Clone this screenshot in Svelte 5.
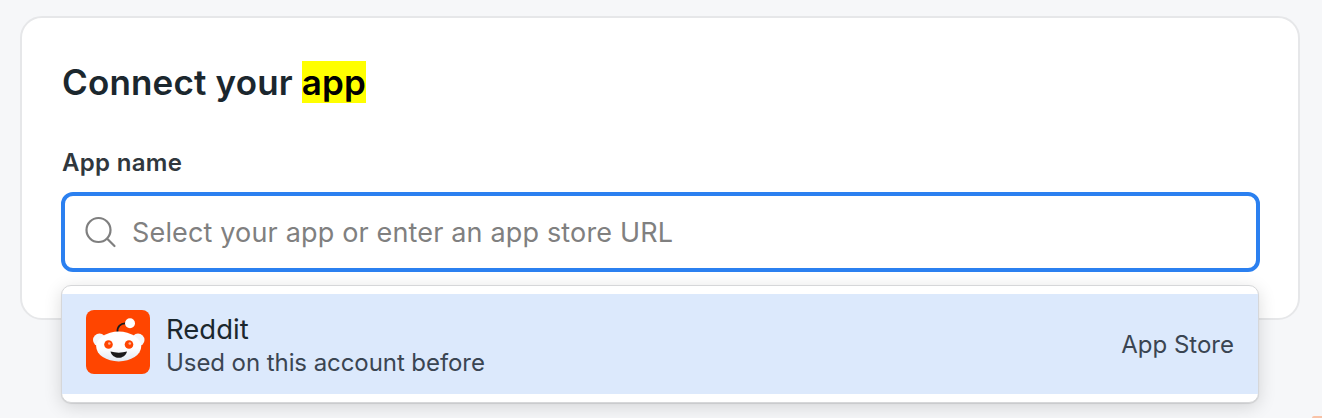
<script>
  const title = 'Connect your';
</script>

<div class="page">
  <section class="card">
    <h1>{title} <mark>app</mark></h1>
    <div class="label">App name</div>
    <div class="field">
      <div class="input">
        <svg class="search" width="32" height="32" viewBox="0 0 32 32" fill="none" stroke="#7f7f7f" stroke-width="2.2" stroke-linecap="round">
          <circle cx="13.500" cy="14" r="12"/>
          <path d="M22.500 23l7 7"/>
        </svg>
        <span class="placeholder">Select your app or enter an app store URL</span>
      </div>
      <div class="menu">
        <div class="option">
          <svg class="logo" width="64" height="64" viewBox="0 0 64 64">
            <defs>
              <linearGradient id="head" x1="0" y1="0" x2="0" y2="1">
                <stop offset="0.55" stop-color="#ffffff"/>
                <stop offset="1" stop-color="#dfe8f2"/>
              </linearGradient>
            </defs>
            <rect width="64" height="64" rx="8" fill="#ff4500"/>
            <path d="M31.500 22c-0.500-5 3-9 8.500-8.500" fill="none" stroke="#1a1a1b" stroke-width="1.800" stroke-linecap="round"/>
            <circle cx="44" cy="13.300" r="5" fill="#fff"/>
            <circle cx="13.500" cy="30" r="6.500" fill="#f4f7fa"/>
            <circle cx="52" cy="30" r="6.500" fill="#f4f7fa"/>
            <ellipse cx="32.700" cy="36.500" rx="22.500" ry="15" fill="url(#head)"/>
            <circle cx="22.500" cy="34.500" r="4.300" fill="#ff4500"/>
            <circle cx="43" cy="34.500" r="4.300" fill="#ff4500"/>
            <circle cx="23.300" cy="33.500" r="1.300" fill="#ffb199"/>
            <circle cx="43.800" cy="33.500" r="1.300" fill="#ffb199"/>
            <path d="M24.500 41.500c5 1.500 11.500 1.500 16.500 0c-1 4-4.500 6.300-8.250 6.300s-7.250-2.300-8.250-6.300z" fill="#1a1a1b"/>
          </svg>
          <div class="text">
            <div class="name">Reddit</div>
            <div class="sub">Used on this account before</div>
          </div>
          <div class="store">App Store</div>
        </div>
      </div>
    </div>
  </section>
  <div class="sliver"></div>
</div>

<style>
  :global(body) {
    margin: 0;
    background: #f6f7f9;
  }
  .page {
    position: relative;
    height: 418px;
    padding: 16px 22px 0 20px;
    box-sizing: border-box;
    overflow: hidden;
    font-family: Inter, "Noto Sans", sans-serif;
  }
  .card {
    box-sizing: border-box;
    height: 304px;
    padding: 42px 38px 0 39px;
    background: #fff;
    border: 2px solid #e6e7e9;
    border-radius: 22px;
  }
  h1 {
    margin: 0 0 0 1px;
    font-size: 35px;
    line-height: 44px;
    font-weight: 600;
    letter-spacing: 0.17px;
    color: #1b272e;
  }
  mark {
    background: #ffff00;
    color: #000;
  }
  .label {
    margin: 44px 0 0 1px;
    font-size: 24px;
    line-height: 30px;
    font-weight: 600;
    letter-spacing: 0.3px;
    color: #30373d;
  }
  .field {
    position: relative;
    margin-top: 14px;
  }
  .input {
    box-sizing: border-box;
    height: 80px;
    display: flex;
    align-items: center;
    gap: 15px;
    padding: 0 20px;
    border: 4px solid #2b80f0;
    border-radius: 12px;
    background: #fff;
  }
  .search { flex: none; }
  .placeholder {
    font-size: 27px;
    letter-spacing: 0.16px;
    color: #808080;
  }
  .menu {
    position: absolute;
    left: 0;
    right: 1px;
    top: 93px;
    box-sizing: border-box;
    padding: 8px 0;
    background: #fff;
    border: 1px solid #d6d7d9;
    border-radius: 10px;
    box-shadow: 0 1px 1px rgba(0, 0, 0, 0.1), 0 4px 18px rgba(0, 0, 0, 0.14);
  }
  .option {
    height: 100px;
    display: flex;
    align-items: center;
    padding: 0 24px;
    background: #dce9fc;
  }
  .logo {
    flex: none;
    margin-bottom: 4px;
  }
  .text {
    margin-left: 16px;
    padding-top: 3px;
    flex: 1;
  }
  .name {
    font-size: 27.5px;
    line-height: 34px;
    color: #1b272e;
  }
  .sub {
    font-size: 24px;
    line-height: 34px;
    letter-spacing: -0.07px;
    color: #3a4552;
  }
  .store {
    font-size: 24px;
    color: #3a4552;
  }
  .sliver {
    position: absolute;
    right: 0;
    bottom: 0;
    width: 10px;
    height: 2px;
    border-radius: 10px 0 0 0;
    background: #f9c3a8;
  }
</style>
